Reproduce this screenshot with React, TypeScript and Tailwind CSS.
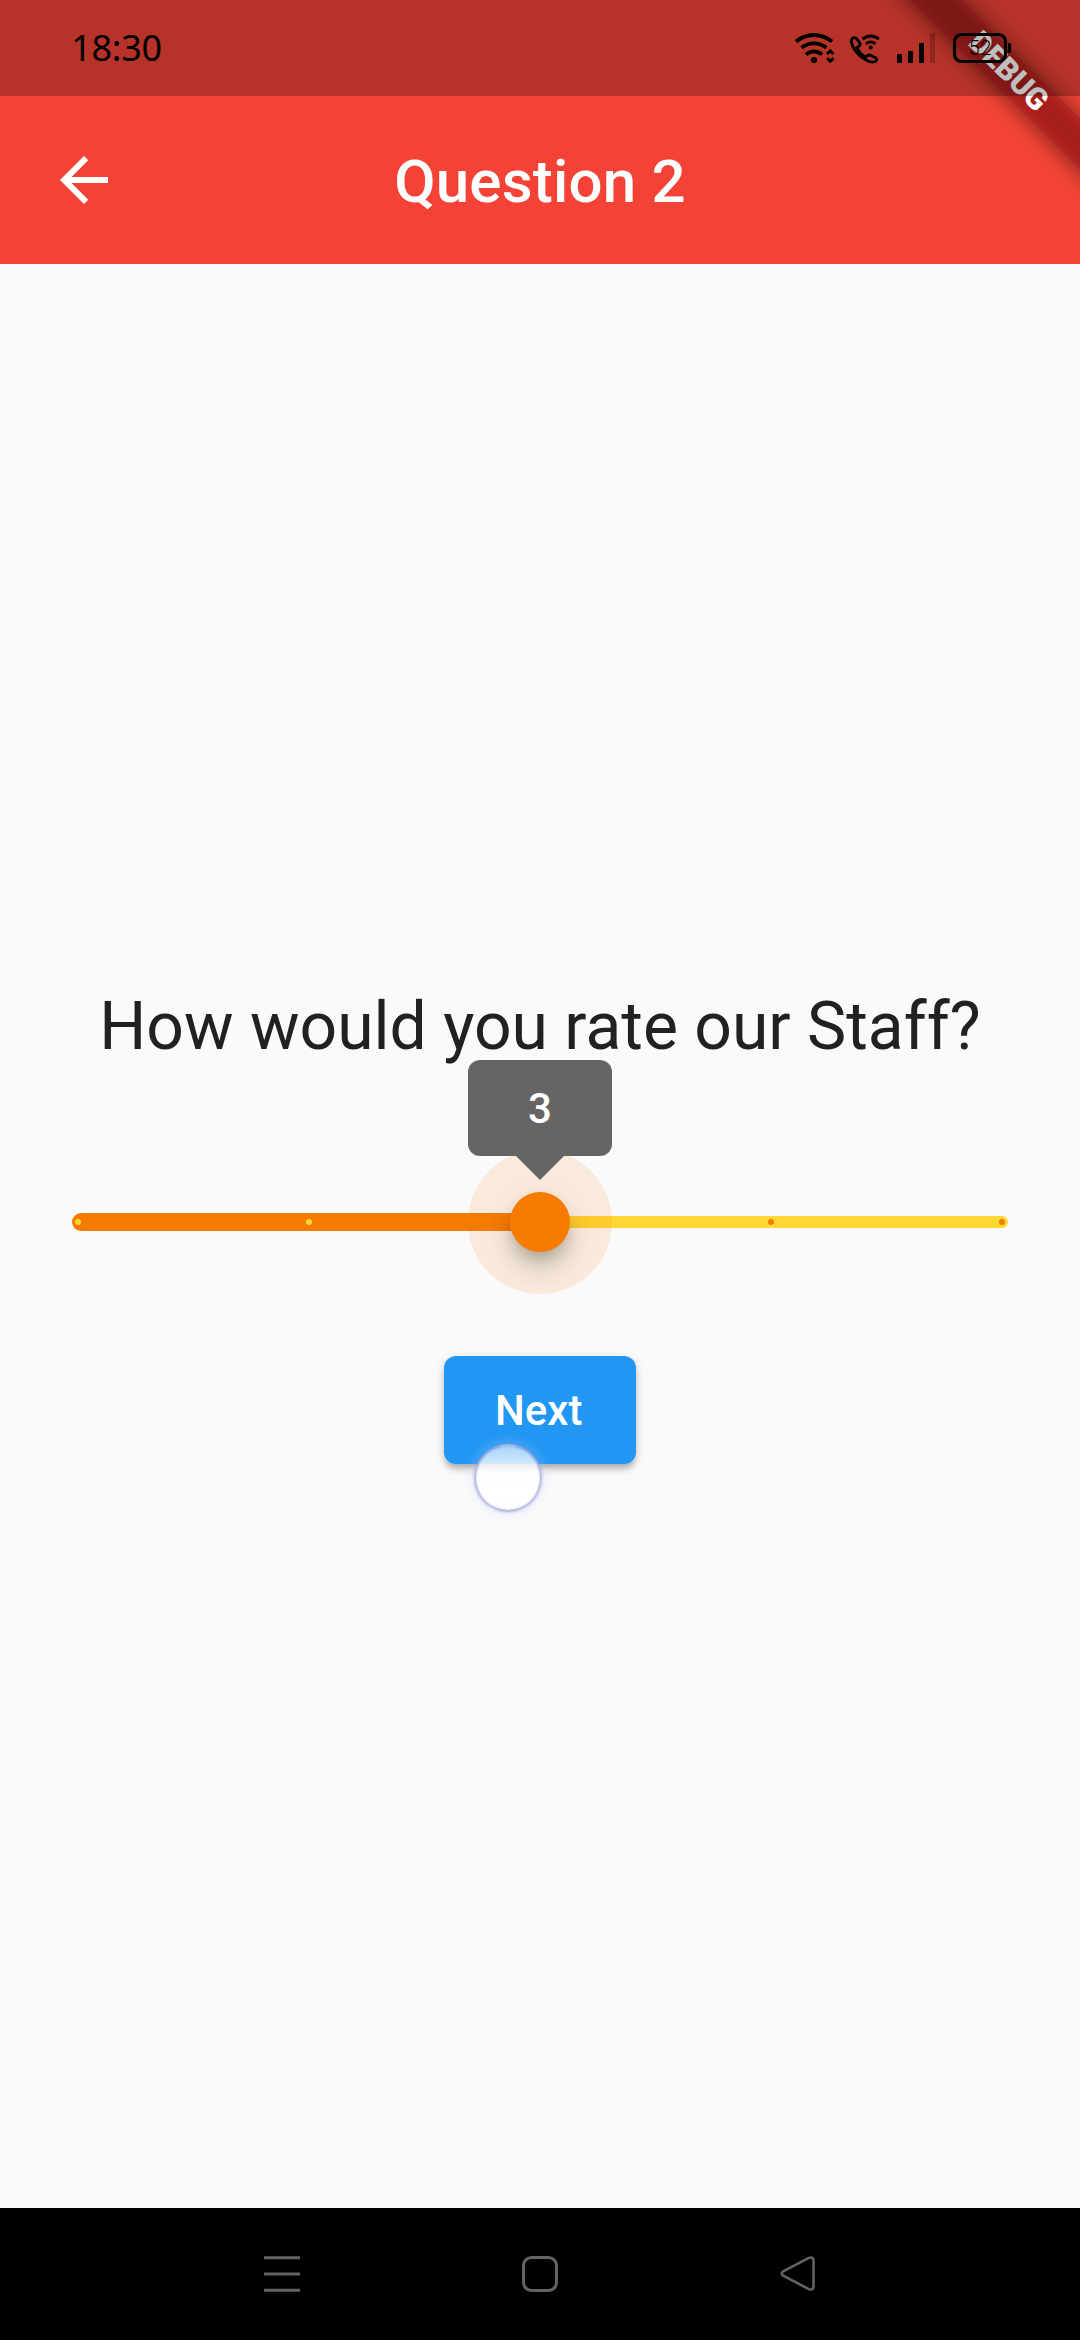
import React from "react";

function StatusBar() {
  return (
    <div className="absolute inset-x-0 top-0 flex h-24 items-start bg-black/25 pl-[71px]">
      <span className="mt-[22px] font-['Noto_Sans'] text-[36px] leading-[52px] font-normal tracking-[-0.2px] text-black">
        18:30
      </span>
      <svg className="absolute top-0 right-0" width="300" height="96" viewBox="780 0 300 96" fill="none" stroke="#000">
        {/* wifi */}
        <g strokeWidth="3.8">
          <path d="M796 41.5C807 32.8 821 32.8 832 41.5" />
          <path d="M801.5 47.8C809 41.8 819 41.8 826.5 47.8" />
          <path d="M806 54.6C811 50.4 817 50.4 822 54.6" />
          <path d="M827 54L830.3 51L833.6 54M827 58.2L830.3 61.2L833.6 58.2" strokeWidth="3" />
        </g>
        <circle cx="814" cy="60" r="3.1" fill="#000" stroke="none" />
        {/* wifi call */}
        <path
          d="M852.2 38.6C853.5 37.2 855.6 37.2 856.6 38.6L859.6 42.6C860.6 44 860.2 45.4 858.8 46.4L857.2 47.6C858.4 51.4 861.8 55 865.8 57.2L867.4 55.8C868.6 54.8 870 54.8 871.4 55.6L875.4 57.8C877 58.8 877.2 60 876 61C873.6 62.8 870.4 62.4 867 60.6C859.8 57 854 50.4 852 44.4C851.2 42 851 40 852.2 38.6Z"
          strokeWidth="2.8"
        />
        <path d="M855.4 48.6L858.4 46.4M864.4 58.2L867.6 55.6" strokeWidth="2.4" />
        <path d="M862.6 39.2C867.2 35 874.2 35 878.8 39.2M866 43.8C868.8 41.4 872.6 41.4 875.4 43.8" strokeWidth="3" />
        <circle cx="870.7" cy="47.4" r="2" fill="#000" stroke="none" />
        {/* signal */}
        <g fill="#000" stroke="none">
          <rect x="897" y="54" width="5" height="9" rx="1" />
          <rect x="908" y="51" width="5" height="12" rx="1" />
          <rect x="919" y="43" width="5" height="20" rx="1" />
          <rect x="930" y="33" width="5" height="30" rx="1" opacity=".22" />
          <path d="M1008 43h1.5a1.5 1.5 0 0 1 1.5 1.5v7a1.5 1.5 0 0 1-1.5 1.5h-1.5z" />
        </g>
        <rect x="954.5" y="34.5" width="51" height="27" rx="7" strokeWidth="3.2" />
        <text x="980.5" y="54.6" textAnchor="middle" fill="#000" stroke="none" fontFamily="Roboto, sans-serif" fontSize="19.5" fontWeight="300" letterSpacing="1">
          52
        </text>
      </svg>
    </div>
  );
}

function DebugBanner() {
  return (
    <div className="absolute top-0 right-0 h-[240px] w-[240px] overflow-hidden">
      <div className="absolute top-[84px] left-[120px] h-9 w-[240px] origin-[120px_-84px] rotate-45">
        <div className="absolute inset-y-0 -inset-x-6 bg-black/50 blur-[11px]" />
        <div className="relative flex h-9 items-center justify-center bg-[#b71c1c]/[.63] pb-[2px] font-['Roboto'] text-[30.6px] leading-none font-black text-white">
          DEBUG
        </div>
      </div>
    </div>
  );
}

function AppBar() {
  return (
    <header className="flex h-[264px] items-center bg-[#f44336] px-12 pt-24">
      <svg className="h-[72px] w-[72px]" viewBox="0 0 24 24" fill="#fff">
        <path d="M20 11H7.83l5.59-5.59L12 4l-8 8 8 8 1.41-1.41L7.83 13H20v-2z" />
      </svg>
      <h1 className="mt-1 flex-1 text-center text-[60px] leading-[72px] font-medium tracking-[0.2px] text-white">Question 2</h1>
      <div className="w-[72px]" />
    </header>
  );
}

function Slider() {
  return (
    <div className="relative mt-[83px] flex h-36 w-[936px] items-center">
      <div className="flex h-[18px] w-[468px] items-center rounded-l-full bg-[#f57c00] pl-[3px]">
        <span className="h-1.5 w-1.5 rounded-full bg-[#fdd835]" />
        <span className="ml-[225px] h-1.5 w-1.5 rounded-full bg-[#fdd835]" />
      </div>
      <div className="flex h-3 w-[468px] items-center justify-end rounded-r-full bg-[#fdd835] pr-[3px]">
        <span className="mr-[225px] h-1.5 w-1.5 rounded-full bg-[#f57c00]" />
        <span className="h-1.5 w-1.5 rounded-full bg-[#f57c00]" />
      </div>
      <div className="absolute top-0 left-[396px] flex h-36 w-36 items-center justify-center rounded-full bg-[#f57c00]/[.12]">
        <div className="h-[60px] w-[60px] rounded-full bg-[#f57c00] shadow-[0_9px_15px_-3px_rgba(0,0,0,0.2),0_18px_30px_0_rgba(0,0,0,0.14),0_3px_40px_0_rgba(0,0,0,0.03)]" />
      </div>
      <div className="absolute top-[-90px] left-[396px] flex h-24 w-36 items-center justify-center rounded-xl bg-[#656565] text-[42px] font-medium text-white">
        3
        <svg className="absolute top-[95px] left-12" width="48" height="25" fill="#656565">
          <path d="M0 1V0H48V1L24 25Z" />
        </svg>
      </div>
    </div>
  );
}

function TouchIndicator() {
  return (
    <span className="absolute top-[88px] left-[30px] h-[68px] w-[68px] rounded-full border-2 border-[#5a64be]/40 bg-linear-to-b from-white/60 via-white/80 via-30% to-white/90 shadow-[0_0_2px_1px_rgba(90,100,190,0.2),0_0_12px_2px_rgba(200,215,255,0.35),inset_0_0_2px_rgba(90,100,190,0.35)]" />
  );
}

export default function App() {
  return (
    <div className="relative flex h-[2340px] w-[1080px] flex-col overflow-hidden bg-[#fafafa] font-['Roboto',sans-serif]">
      <AppBar />
      <DebugBanner />
      <StatusBar />
      <main className="flex flex-1 flex-col items-center pt-[723px]">
        <p className="h-20 text-[66px] leading-[80px] whitespace-nowrap text-[#212121]">How would you rate our Staff?</p>
        <Slider />
        <button className="relative mt-[62px] h-[108px] w-48 rounded-xl bg-[#2196f3] pr-[2.5px] text-[42px] font-medium text-white shadow-[0_5px_5px_-2px_rgba(0,0,0,0.14),0_6px_6px_0_rgba(0,0,0,0.12),0_3px_12px_0_rgba(0,0,0,0.12)]">
          Next
          <TouchIndicator />
        </button>
      </main>
      <nav className="flex h-[132px] items-center bg-black pl-[264px]">
        <svg width="552" height="36" viewBox="0 0 552 36" fill="none" stroke="#636363" strokeWidth="3">
          <path d="M0 1.8H36M0 18H36M0 34.2H36" />
          <rect x="259.5" y="1.5" width="33" height="33" rx="8" />
          <path d="M519.2 15.4L544.8 1.9Q549.5 .2 549.5 5V30Q549.5 34.8 544.8 33.1L519.2 19.6Q516.2 17.5 519.2 15.4Z" strokeWidth="2.6" />
        </svg>
      </nav>
    </div>
  );
}
